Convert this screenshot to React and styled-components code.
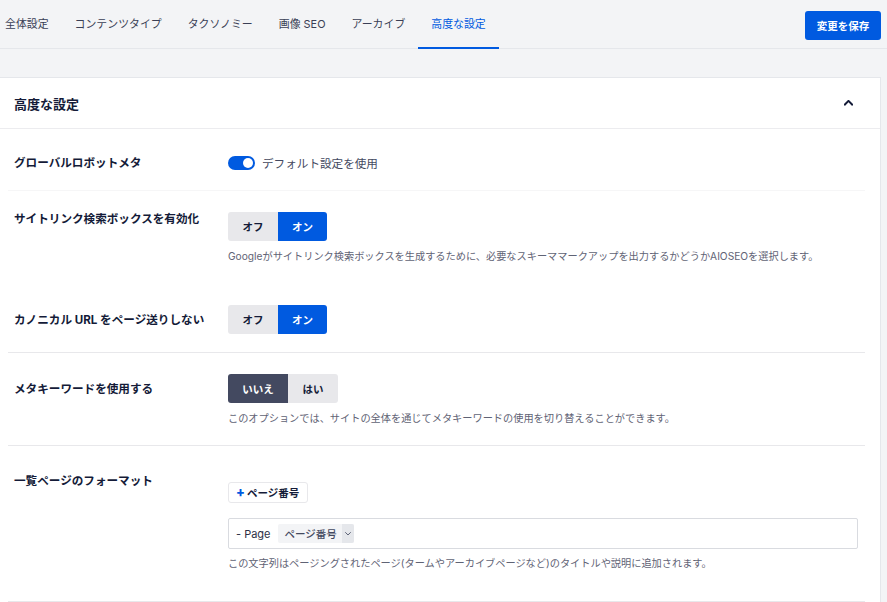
import React from "react";
import styled, { createGlobalStyle } from "styled-components";

const Global = createGlobalStyle`
  html, body { margin: 0; padding: 0; overflow: hidden; }
  body {
    background: #f3f4f6;
    font-family: Inter, "Noto Sans CJK JP", "Noto Sans", sans-serif;
    color: #141b38;
  }
  * { box-sizing: border-box; }
`;

const TopBar = styled.div`
  height: 49px;
  display: flex;
  align-items: stretch;
  justify-content: space-between;
  border-bottom: 1px solid #e5e7eb;
  padding-right: 6px;
`;

const Tabs = styled.nav`
  display: flex;
  margin-left: -8px;
`;

const Tab = styled.div`
  display: flex;
  align-items: center;
  padding: 0 13px 2px;
  font-size: 10.9px;
  color: ${(p) => (p.$active ? "#005ae0" : "#3a3f55")};
  border-bottom: 2px solid ${(p) => (p.$active ? "#005ae0" : "transparent")};
  margin-bottom: -1px;
  white-space: nowrap;
`;

const SaveButton = styled.button`
  align-self: flex-start;
  margin-top: 11px;
  width: 76px;
  height: 29px;
  border: none;
  border-radius: 3px;
  background: #005ae0;
  color: #fff;
  font-family: inherit;
  font-weight: 700;
  font-size: 10.5px;
  padding: 0;
`;

const Card = styled.section`
  margin: 28px 6px 0 0;
  background: #fff;
  border: 1px solid #e5e7eb;
  border-left: none;
`;

const CardHeader = styled.header`
  height: 51px;
  display: flex;
  align-items: center;
  justify-content: space-between;
  padding: 0 27px 0 14px;
  border-bottom: 1px solid #ececef;
`;

const CardTitle = styled.h2`
  margin: 0;
  font-size: 13px;
  font-weight: 700;
  color: #141b38;
`;

const CardBody = styled.div`
  padding: 0 15px 0 8px;
`;

const Row = styled.div`
  display: grid;
  grid-template-columns: 220px 1fr;
  padding: ${(p) => p.$pad};
  border-bottom: ${(p) => p.$border || "none"};
`;

const Label = styled.div`
  padding-left: 6px;
  font-size: 11.6px;
  line-height: 14px;
  font-weight: 700;
  color: #141b38;
  white-space: nowrap;
  padding-top: ${(p) => p.$offset || 0}px;
`;

const Control = styled.div`
  display: flex;
  flex-direction: column;
  align-items: flex-start;
  padding-right: 7px;
  padding-top: ${(p) => p.$offset || 0}px;
`;

const SwitchLine = styled.div`
  display: flex;
  align-items: center;
  gap: 7px;
  height: 14px;
  font-size: 11.6px;
  color: #434960;
`;

const Switch = styled.span`
  position: relative;
  width: 27px;
  height: 14px;
  border-radius: 7px;
  background: #005ae0;
  &::after {
    content: "";
    position: absolute;
    right: 2px;
    top: 2px;
    width: 10px;
    height: 10px;
    border-radius: 50%;
    background: #fff;
  }
`;

const Segmented = styled.div`
  display: inline-flex;
  border-radius: 3px;
  overflow: hidden;
`;

const Segment = styled.button`
  width: ${(p) => p.$w}px;
  height: 29px;
  border: none;
  padding: 0;
  font-family: inherit;
  font-size: 10.5px;
  font-weight: 700;
  background: ${(p) =>
    p.$active ? (p.$dark ? "#434960" : "#005ae0") : "#e8e8eb"};
  color: ${(p) => (p.$active ? "#fff" : "#141b38")};
`;

const Desc = styled.p`
  margin: ${(p) => p.$mt || 9}px 0 0;
  font-size: 10.2px;
  line-height: 12px;
  color: #5f6375;
  white-space: nowrap;
`;

const AddTag = styled.button`
  display: inline-flex;
  align-items: center;
  gap: 2px;
  height: 21px;
  padding: 0 8px 0 7px;
  background: #fff;
  border: 1px solid #e8e8eb;
  border-radius: 3px;
  font-family: inherit;
  font-size: 10.5px;
  font-weight: 700;
  color: #141b38;
`;

const Plus = styled.span`
  color: #005ae0;
  font-size: 13px;
  font-weight: 800;
  line-height: 1;
`;

const Input = styled.div`
  margin-top: 15px;
  width: 100%;
  height: 31px;
  border: 1px solid #d9dbe0;
  border-radius: 2px;
  display: flex;
  align-items: center;
  gap: 7px;
  padding-left: 7px;
  font-size: 11px;
  color: #2c3045;
`;

const Tag = styled.span`
  display: inline-flex;
  align-items: stretch;
  height: 19px;
  background: #f3f4f6;
  border-radius: 2px;
  overflow: hidden;
`;

const TagText = styled.span`
  display: flex;
  align-items: center;
  padding: 0 5px 0 7px;
  font-size: 10.5px;
  font-weight: 500;
  color: #434960;
`;

const TagCaret = styled.span`
  display: flex;
  align-items: center;
  justify-content: center;
  width: 12px;
  background: #e5e7eb;
`;

const Chevron = ({ up, size = 8, color = "#141b38", w = 2 }) => (
  <svg width={size} height={size * 0.6} viewBox="0 0 10 6" fill="none">
    <path
      d={up ? "M1 5 L5 1 L9 5" : "M1 1 L5 5 L9 1"}
      stroke={color}
      strokeWidth={w}
      strokeLinecap="square"
    />
  </svg>
);

const tabs = ["全体設定", "コンテンツタイプ", "タクソノミー", "画像 SEO", "アーカイブ", "高度な設定"];

export default function App() {
  return (
    <>
      <Global />
      <TopBar>
        <Tabs>
          {tabs.map((t) => (
            <Tab key={t} $active={t === "高度な設定"}>
              {t}
            </Tab>
          ))}
        </Tabs>
        <SaveButton>変更を保存</SaveButton>
      </TopBar>
      <Card>
        <CardHeader>
          <CardTitle>高度な設定</CardTitle>
          <Chevron up size={9} w={2.2} />
        </CardHeader>
        <CardBody>
          <Row $pad="27px 0 20px" $border="1px solid #f6f6f7">
            <Label>グローバルロボットメタ</Label>
            <Control>
              <SwitchLine>
                <Switch />
                デフォルト設定を使用
              </SwitchLine>
            </Control>
          </Row>
          <Row $pad="21px 0 21px">
            <Label>サイトリンク検索ボックスを有効化</Label>
            <Control>
              <Segmented>
                <Segment $w={50}>オフ</Segment>
                <Segment $w={49} $active>
                  オン
                </Segment>
              </Segmented>
              <Desc>
                Googleがサイトリンク検索ボックスを生成するために、必要なスキーママークアップを出力するかどうかAIOSEOを選択します。
              </Desc>
            </Control>
          </Row>
          <Row $pad="22px 0 18px" $border="1px solid #e8e8eb">
            <Label $offset={8}>カノニカル URL をページ送りしない</Label>
            <Control>
              <Segmented>
                <Segment $w={50}>オフ</Segment>
                <Segment $w={49} $active>
                  オン
                </Segment>
              </Segmented>
            </Control>
          </Row>
          <Row $pad="21px 0 21px" $border="1px solid #e8e8eb">
            <Label $offset={8}>メタキーワードを使用する</Label>
            <Control>
              <Segmented>
                <Segment $w={60} $active $dark>
                  いいえ
                </Segment>
                <Segment $w={50}>はい</Segment>
              </Segmented>
              <Desc>
                このオプションでは、サイトの全体を通じてメタキーワードの使用を切り替えることができます。
              </Desc>
            </Control>
          </Row>
          <Row $pad="28px 0 32px" $border="1px solid #e8e8eb">
            <Label>一覧ページのフォーマット</Label>
            <Control $offset={8}>
              <AddTag>
                <Plus>+</Plus>ページ番号
              </AddTag>
              <Input>
                - Page
                <Tag>
                  <TagText>ページ番号</TagText>
                  <TagCaret>
                    <Chevron size={6} color="#434960" w={1.4} />
                  </TagCaret>
                </Tag>
              </Input>
              <Desc $mt={8}>
                この文字列はページングされたページ(タームやアーカイブページなど)のタイトルや説明に追加されます。
              </Desc>
            </Control>
          </Row>
        </CardBody>
      </Card>
    </>
  );
}
